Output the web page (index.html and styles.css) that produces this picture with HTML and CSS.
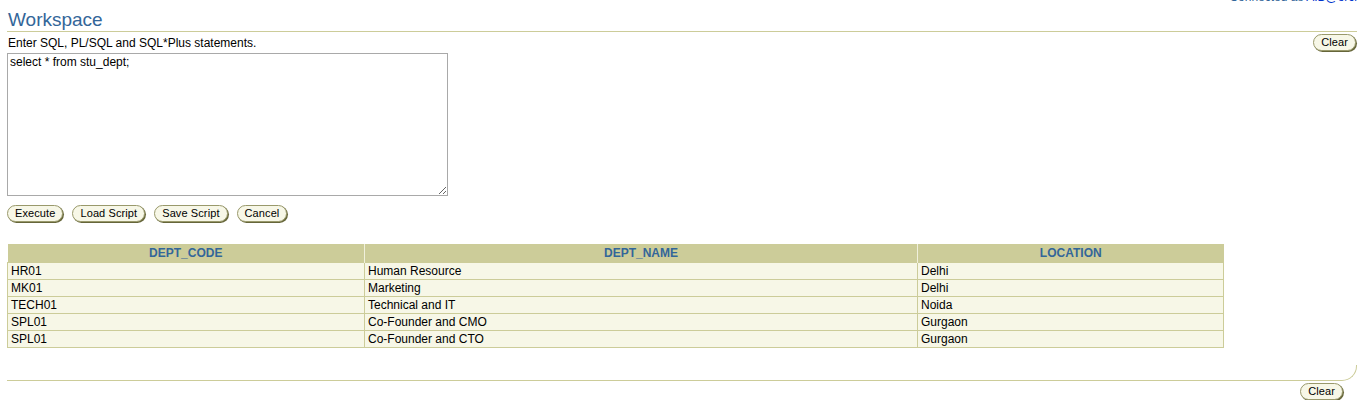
FILE: index.html
```html
<!DOCTYPE html>
<html>
<head>
<meta charset="utf-8">
<link rel="stylesheet" href="styles.css">
</head>
<body>
<div class="topbar"><span class="conn">Connected as <a class="user">AIB@orcl</a></span></div>
<h1 class="title">Workspace</h1>
<div class="instr-row">
  <span class="instr">Enter SQL, PL/SQL and SQL*Plus statements.</span>
  <button class="btn">Clear</button>
</div>
<textarea class="editor">select * from stu_dept;</textarea>
<div class="actions">
  <button class="btn">Execute</button>
  <button class="btn">Load Script</button>
  <button class="btn">Save Script</button>
  <button class="btn">Cancel</button>
</div>
<table class="results">
  <colgroup><col class="c1"><col class="c2"><col class="c3"></colgroup>
  <thead>
    <tr><th>DEPT_CODE</th><th>DEPT_NAME</th><th>LOCATION</th></tr>
  </thead>
  <tbody>
    <tr><td>HR01</td><td>Human Resource</td><td>Delhi</td></tr>
    <tr><td>MK01</td><td>Marketing</td><td>Delhi</td></tr>
    <tr><td>TECH01</td><td>Technical and IT</td><td>Noida</td></tr>
    <tr><td>SPL01</td><td>Co-Founder and CMO</td><td>Gurgaon</td></tr>
    <tr><td>SPL01</td><td>Co-Founder and CTO</td><td>Gurgaon</td></tr>
  </tbody>
</table>
<div class="footer-rule"></div>
<div class="footer-row"><button class="btn">Clear</button></div>
</body>
</html>
```
FILE: styles.css
```css
html, body {
  margin: 0;
  padding: 0;
  background: #ffffff;
  font-family: "Liberation Sans", Arial, sans-serif;
  font-size: 12px;
  color: #000000;
}
.topbar {
  height: 4px;
  overflow: visible;
  display: flex;
  justify-content: flex-end;
  padding-right: 8px;
}
.conn {
  font-size: 12px;
  line-height: 12px;
  margin-top: -9px;
  color: #336699;
}
.user {
  color: #0033cc;
}
.title {
  margin: 5px 8px 0 7px;
  padding: 0 0 0 1px;
  font-size: 19px;
  font-weight: normal;
  line-height: 22px;
  color: #336699;
  border-bottom: 1px solid #cccc99;
}
.instr-row {
  display: flex;
  justify-content: space-between;
  align-items: flex-start;
  margin: 0 8px 0 8px;
  padding-top: 2px;
  height: 19px;
}
.instr {
  line-height: 14px;
  margin-top: 2px;
}
.btn {
  font-family: "Liberation Sans", Arial, sans-serif;
  font-size: 11px;
  line-height: 13px;
  letter-spacing: 0.1px;
  height: 17px;
  padding: 0 7px;
  margin: 0;
  color: #000;
  background: #f7f7e7;
  border: 1px solid #99996b;
  border-radius: 9px;
  box-shadow: 1px 1px 0 #66663a;
}
.instr-row .btn {
  margin-right: 1px;
}
.editor {
  display: block;
  box-sizing: border-box;
  margin: 0 0 0 7px;
  width: 441px;
  height: 143px;
  border: 1px solid #a9a9a9;
  padding: 1px 2px;
  font-family: "Liberation Sans", Arial, sans-serif;
  font-size: 12px;
  line-height: 14px;
  resize: both;
}
.actions {
  display: flex;
  gap: 9px;
  margin: 9px 0 0 7px;
}
.results {
  margin: 22px 0 0 7px;
  width: 1216px;
  border-collapse: collapse;
  table-layout: fixed;
}
.c1 { width: 357px; }
.c2 { width: 553px; }
.c3 { width: 306px; }
.results th {
  background: #cccc99;
  color: #336699;
  font-weight: bold;
  font-size: 12px;
  height: 18px;
  padding: 0 3px;
  text-align: center;
  border-left: 1px solid #f0f0dc;
}
.results th:first-child {
  border-left: none;
}
.results td {
  background: #f7f7e7;
  border: 1px solid #cccc99;
  height: 16px;
  padding: 0 3px;
  line-height: 16px;
  white-space: nowrap;
}
.footer-rule {
  margin: 17px 8px 0 7px;
  height: 15px;
  border-right: 1px solid #cccc99;
  border-bottom: 1px solid #cccc99;
  border-bottom-right-radius: 15px;
}
.footer-row {
  display: flex;
  justify-content: flex-end;
  margin: 2px 22px 0 0;
}
```
